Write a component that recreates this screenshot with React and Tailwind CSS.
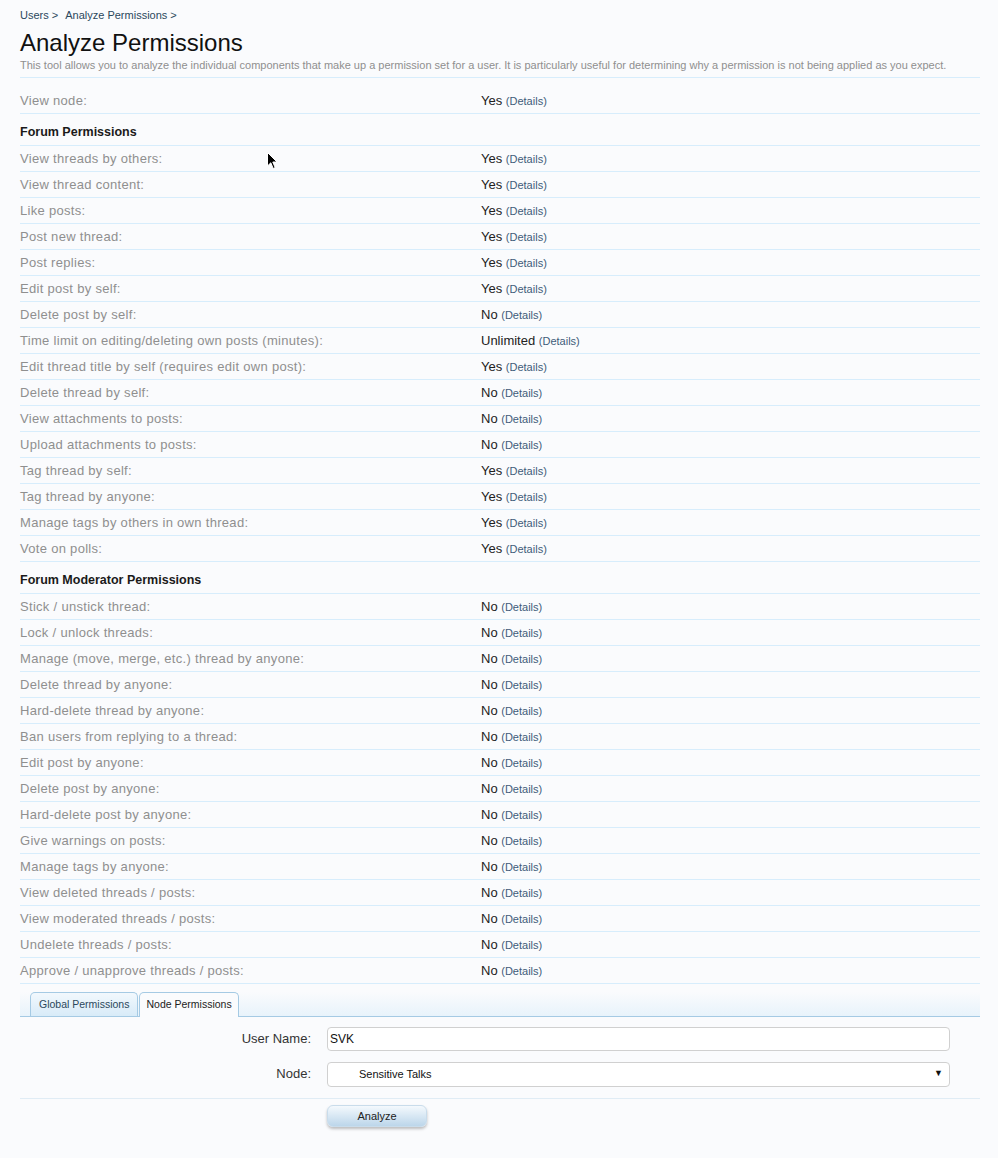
import React from 'react';

const forumPerms = [
  ['View threads by others:', 'Yes'],
  ['View thread content:', 'Yes'],
  ['Like posts:', 'Yes'],
  ['Post new thread:', 'Yes'],
  ['Post replies:', 'Yes'],
  ['Edit post by self:', 'Yes'],
  ['Delete post by self:', 'No'],
  ['Time limit on editing/deleting own posts (minutes):', 'Unlimited'],
  ['Edit thread title by self (requires edit own post):', 'Yes'],
  ['Delete thread by self:', 'No'],
  ['View attachments to posts:', 'No'],
  ['Upload attachments to posts:', 'No'],
  ['Tag thread by self:', 'Yes'],
  ['Tag thread by anyone:', 'Yes'],
  ['Manage tags by others in own thread:', 'Yes'],
  ['Vote on polls:', 'Yes'],
];

const modPerms = [
  'Stick / unstick thread:',
  'Lock / unlock threads:',
  'Manage (move, merge, etc.) thread by anyone:',
  'Delete thread by anyone:',
  'Hard-delete thread by anyone:',
  'Ban users from replying to a thread:',
  'Edit post by anyone:',
  'Delete post by anyone:',
  'Hard-delete post by anyone:',
  'Give warnings on posts:',
  'Manage tags by anyone:',
  'View deleted threads / posts:',
  'View moderated threads / posts:',
  'Undelete threads / posts:',
  'Approve / unapprove threads / posts:',
];

const PermRow = ({ label, value }) => (
  <div className="flex items-center h-[26px] border-b border-[#d7edfc]">
    <div className="w-[461px] text-[13px] tracking-[0.3px] text-[#8f8f8f]">{label}</div>
    <div className="text-[13px] text-[#222]">
      {value} <a className="text-[11px] text-[#3f5c7a]">(Details)</a>
    </div>
  </div>
);

const SectionHead = ({ children }) => (
  <div className="flex items-end h-[32px] pb-[3px] border-b border-[#d7edfc] text-[12.5px] font-bold text-[#1a1a1a]">
    {children}
  </div>
);

export default function App() {
  return (
    <div
      className="relative min-h-[1158px] bg-[#fafbfd] pl-5 pr-[18px] pt-[8px]"
      style={{ fontFamily: '"Liberation Sans", Arial, sans-serif' }}
    >
      <div className="text-[11px] text-[#2b485c] flex gap-[7px] h-[15px] items-center">
        <span>Users &gt;</span>
        <span>Analyze Permissions &gt;</span>
      </div>
      <h1 className="text-[24px] leading-[30px] text-[#111] mt-[5px]">Analyze Permissions</h1>
      <p className="text-[11px] whitespace-nowrap text-[#8f8f8f] leading-[14px] pb-[5px] border-b border-[#d7edfc]">
        This tool allows you to analyze the individual components that make up a permission set for a user. It is particularly useful for determining why a permission is not being applied as you expect.
      </p>

      <div className="mt-[10px]">
        <PermRow label="View node:" value="Yes" />
        <SectionHead>Forum Permissions</SectionHead>
        {forumPerms.map(([l, v]) => (
          <PermRow key={l} label={l} value={v} />
        ))}
        <SectionHead>Forum Moderator Permissions</SectionHead>
        {modPerms.map((l) => (
          <PermRow key={l} label={l} value="No" />
        ))}
      </div>

      <div className="mt-[8px] flex items-end h-[25px] pl-[10px] border-b border-[#a5cae4] bg-gradient-to-b from-[#fafbfd] to-[#e8f3fb]">
        <div className="h-[24px] px-[8px] flex items-center text-[10.5px] text-[#2b485c] border border-b-0 border-[#a5cae4] rounded-t-[5px] bg-gradient-to-b from-[#f2f8fd] to-[#d8ebf8]">
          Global Permissions
        </div>
        <div className="h-[25px] -mb-px ml-[1px] px-[6px] flex items-center text-[10.5px] text-[#222] border border-b-0 border-[#a5cae4] rounded-t-[5px] bg-[#fafbfd]">
          Node Permissions
        </div>
      </div>

      <div className="pt-[10px] pb-[12px] border-b border-[#e0ecf5]">
        <div className="flex items-center h-[24px]">
          <label className="w-[291px] text-right text-[13px] text-[#333]">User Name:</label>
          <div className="ml-[16px] w-[623px] h-[24px] border border-[#d0d0d0] rounded-[4px] bg-white flex items-center px-[2px] text-[12px] text-[#111]">
            SVK
          </div>
        </div>
        <div className="flex items-center h-[24px] mt-[11px]">
          <label className="w-[291px] text-right text-[13px] text-[#333]">Node:</label>
          <div className="ml-[16px] w-[623px] h-[25px] border border-[#d0d0d0] rounded-[4px] bg-white flex items-center pl-[31px] pr-[6px] text-[11px] text-[#111]">
            <span className="flex-1">Sensitive Talks</span>
            <span className="text-[9px]">▼</span>
          </div>
        </div>
      </div>

      <div className="pl-[307px] pt-[4px]">
        <button className="w-[100px] h-[22px] rounded-[6px] text-[11px] text-[#222] bg-gradient-to-b from-[#f4f9fd] to-[#bcd6ea] border border-[#c9dceb] shadow-[0_2px_3px_rgba(0,0,0,0.25)]">
          Analyze
        </button>
      </div>

      <svg className="absolute left-[267px] top-[152px]" width="11" height="18" viewBox="0 0 11 18">
        <path d="M0.5 0.5 L0.5 14 L3.8 10.8 L6.2 16.5 L8.2 15.6 L5.8 10 L10 10 Z" fill="#000" stroke="#fff" strokeWidth="1" />
      </svg>
    </div>
  );
}
